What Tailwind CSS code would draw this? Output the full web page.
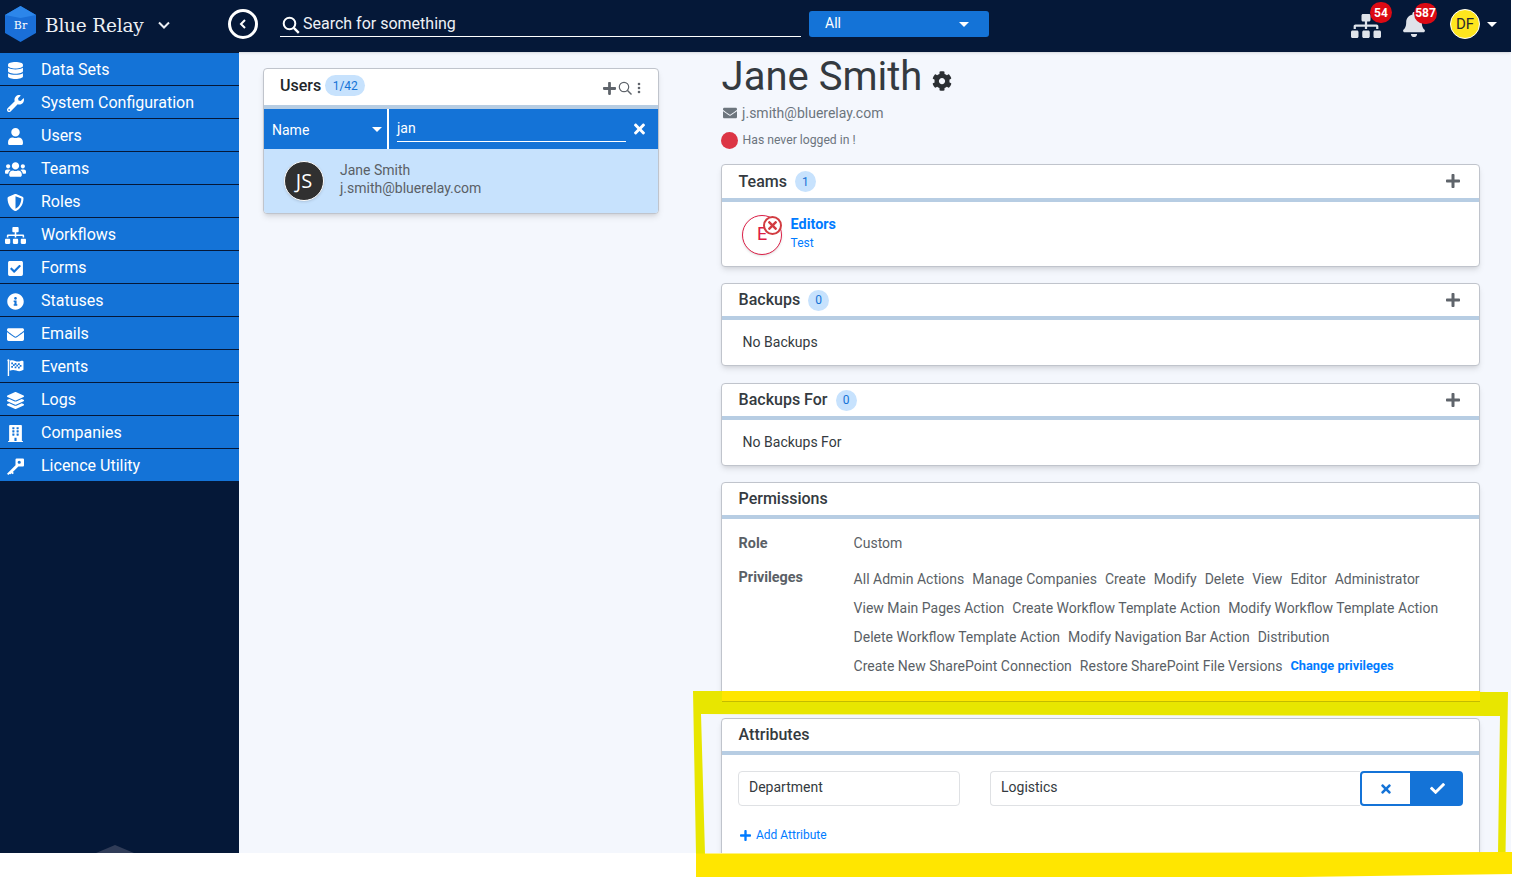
<!DOCTYPE html>
<html lang="en">
<head>
  <meta charset="UTF-8" />
  <title>Blue Relay - Users</title>
  <script src="https://cdn.jsdelivr.net/npm/@tailwindcss/browser@4"></script>
</head>
<body class="bg-white font-['Roboto',sans-serif] overflow-hidden">
  <svg class="hidden">
    <symbol id="i-database" viewBox="0 0 448 512"><path fill="currentColor" d="M448 73.143v45.714C448 159.143 347.667 192 224 192S0 159.143 0 118.857V73.143C0 32.857 100.333 0 224 0s224 32.857 224 73.143zM448 176v102.857C448 319.143 347.667 352 224 352S0 319.143 0 278.857V176c48.125 33.143 136.208 48.572 224 48.572S399.874 209.143 448 176zm0 160v102.857C448 479.143 347.667 512 224 512S0 479.143 0 438.857V336c48.125 33.143 136.208 48.572 224 48.572S399.874 369.143 448 336z"/></symbol>
    <symbol id="i-wrench" viewBox="0 0 512 512"><path fill="currentColor" d="M507.73 109.1c-2.24-9.03-13.54-12.09-20.12-5.51l-74.36 74.36-67.88-11.31-11.31-67.88 74.36-74.36c6.62-6.62 3.43-17.9-5.66-20.16-47.38-11.74-99.55.91-136.58 37.93-39.64 39.64-50.55 97.1-34.05 147.2L18.74 402.76c-24.99 24.99-24.99 65.51 0 90.5 24.99 24.99 65.51 24.99 90.5 0l213.21-213.21c50.12 16.71 107.47 5.68 147.37-34.22 37.07-37.07 49.7-89.32 37.91-136.73zM64 472c-13.25 0-24-10.75-24-24 0-13.26 10.75-24 24-24s24 10.74 24 24c0 13.25-10.75 24-24 24z"/></symbol>
    <symbol id="i-user" viewBox="0 0 448 512"><path fill="currentColor" d="M224 256c70.7 0 128-57.3 128-128S294.7 0 224 0 96 57.3 96 128s57.3 128 128 128zm89.6 32h-16.7c-22.2 10.2-46.9 16-72.9 16s-50.6-5.8-72.9-16h-16.7C60.2 288 0 348.2 0 422.4V464c0 26.5 21.5 48 48 48h352c26.5 0 48-21.5 48-48v-41.6c0-74.2-60.2-134.4-134.4-134.4z"/></symbol>
    <symbol id="i-users" viewBox="0 0 640 512"><path fill="currentColor" d="M96 224c35.3 0 64-28.7 64-64s-28.7-64-64-64-64 28.7-64 64 28.7 64 64 64zm448 0c35.3 0 64-28.7 64-64s-28.7-64-64-64-64 28.7-64 64 28.7 64 64 64zm32 32h-64c-17.6 0-33.5 7.1-45.1 18.6 40.3 22.1 68.9 62 75.1 109.4h66c17.7 0 32-14.3 32-32v-32c0-35.3-28.7-64-64-64zm-256 0c61.9 0 112-50.1 112-112S381.9 32 320 32 208 82.1 208 144s50.1 112 112 112zm76.8 32h-8.3c-20.8 10-43.9 16-68.5 16s-47.6-6-68.5-16h-8.3C179.6 288 128 339.6 128 403.2V432c0 26.5 21.5 48 48 48h288c26.5 0 48-21.5 48-48v-28.8c0-63.6-51.6-115.2-115.2-115.2zm-223.7-13.4C161.5 263.1 145.6 256 128 256H64c-35.3 0-64 28.7-64 64v32c0 17.7 14.3 32 32 32h65.9c6.3-47.4 34.9-87.3 75.2-109.4z"/></symbol>
    <symbol id="i-shield" viewBox="0 0 512 512"><path fill="currentColor" d="M466.5 83.7l-192-80a48.15 48.15 0 0 0-36.9 0l-192 80C27.7 91.1 16 108.6 16 128c0 198.5 114.5 335.7 221.5 380.3 11.8 4.9 25.1 4.9 36.9 0C360.1 472.6 496 349.3 496 128c0-19.4-11.7-36.9-29.5-44.3zM256.1 446.3l-.1-381 175.9 73.3c-3.3 151.4-82.1 261.1-175.8 307.7z"/></symbol>
    <symbol id="i-sitemap" viewBox="0 0 640 512"><path fill="currentColor" d="M128 352H32c-17.67 0-32 14.33-32 32v96c0 17.67 14.33 32 32 32h96c17.67 0 32-14.33 32-32v-96c0-17.67-14.33-32-32-32zm-24-80h192v48h48v-48h192v48h48v-57.59c0-21.17-17.23-38.41-38.41-38.41H344v-64h40c17.67 0 32-14.33 32-32V32c0-17.67-14.33-32-32-32H256c-17.67 0-32 14.33-32 32v96c0 17.67 14.33 32 32 32h40v64H94.41C73.23 224 56 241.23 56 262.41V320h48v-48zm264 80h-96c-17.67 0-32 14.33-32 32v96c0 17.67 14.33 32 32 32h96c17.67 0 32-14.33 32-32v-96c0-17.67-14.33-32-32-32zm240 0h-96c-17.67 0-32 14.33-32 32v96c0 17.67 14.33 32 32 32h96c17.67 0 32-14.33 32-32v-96c0-17.67-14.33-32-32-32z"/></symbol>
    <symbol id="i-check-square" viewBox="0 0 448 512"><path fill="currentColor" d="M400 480H48c-26.51 0-48-21.49-48-48V80c0-26.51 21.49-48 48-48h352c26.51 0 48 21.49 48 48v352c0 26.51-21.49 48-48 48zm-204.686-98.059l184-184c6.248-6.248 6.248-16.379 0-22.627l-22.627-22.627c-6.248-6.248-16.379-6.249-22.628 0L184 302.745l-70.059-70.059c-6.248-6.248-16.379-6.248-22.628 0l-22.627 22.627c-6.248 6.248-6.248 16.379 0 22.627l104 104c6.249 6.25 16.379 6.25 22.628.001z"/></symbol>
    <symbol id="i-info" viewBox="0 0 512 512"><path fill="currentColor" d="M256 8C119.043 8 8 119.083 8 256c0 136.997 111.043 248 248 248s248-111.003 248-248C504 119.083 392.957 8 256 8zm0 110c23.196 0 42 18.804 42 42s-18.804 42-42 42-42-18.804-42-42 18.804-42 42-42zm56 254c0 6.627-5.373 12-12 12h-88c-6.627 0-12-5.373-12-12v-24c0-6.627 5.373-12 12-12h12v-64h-12c-6.627 0-12-5.373-12-12v-24c0-6.627 5.373-12 12-12h64c6.627 0 12 5.373 12 12v100h12c6.627 0 12 5.373 12 12v24z"/></symbol>
    <symbol id="i-envelope" viewBox="0 0 512 512"><path fill="currentColor" d="M502.3 190.8c3.9-3.1 9.7-.2 9.7 4.7V400c0 26.5-21.5 48-48 48H48c-26.5 0-48-21.5-48-48V195.6c0-5 5.7-7.8 9.7-4.7 22.4 17.4 52.1 39.5 154.1 113.6 21.1 15.4 56.7 47.8 92.2 47.6 35.7.3 72-32.8 92.3-47.6 102-74.1 131.6-96.3 154-113.7zM256 320c23.2.4 56.6-29.2 73.4-41.4 132.7-96.3 142.8-104.7 173.4-128.7 5.8-4.5 9.2-11.5 9.2-18.9v-19c0-26.5-21.5-48-48-48H48C21.5 64 0 85.5 0 112v19c0 7.4 3.4 14.3 9.2 18.9 30.6 23.9 40.7 32.4 173.4 128.7 16.8 12.2 50.2 41.8 73.4 41.4z"/></symbol>
    <symbol id="i-flag" viewBox="0 0 16 16"><path fill="currentColor" fill-rule="evenodd" d="M1.200 0.300a1.100 1.100 0 0 1 0.800 1.900V16H0.700V2.200A1.100 1.100 0 0 1 1.200 0.300zM2.600 1.600c2-0.800 3.400-0.500 5 0.200s3.400 0.800 5.300 0.100c1.200-0.500 2.600-0.300 2.600 0.800v7.500c-2.200 1.500-4.600 1.500-6.800 0.700s-4-0.700-6.100 0.100zM4 3.400v1.600h1.600V3.400zM7.200 3.800v1.600h1.600V3.800zM10.400 4.100v1.600h1.600V4.100zM5.600 5v1.600h1.600V5zM8.800 5.400v1.600h1.600V5.400zM12 5.700v1.600h1.600V5.700zM4 6.600v1.600h1.600V6.600zM7.200 7v1.600h1.600V7zM10.400 7.300v1.600h1.600V7.300z"/></symbol>
    <symbol id="i-layers" viewBox="0 0 512 512"><path fill="currentColor" d="M12.41 148.02l232.94 105.67c6.8 3.09 14.49 3.09 21.29 0l232.94-105.67c16.55-7.51 16.55-32.52 0-40.03L266.65 2.31a25.607 25.607 0 0 0-21.29 0L12.41 107.98c-16.55 7.51-16.55 32.53 0 40.04zm487.18 88.28l-58.09-26.33-161.64 73.27c-7.56 3.43-15.59 5.17-23.86 5.17s-16.29-1.74-23.86-5.17L70.51 209.97l-58.1 26.33c-16.55 7.5-16.55 32.5 0 40l232.94 105.59c6.8 3.08 14.49 3.08 21.29 0L499.59 276.3c16.55-7.5 16.55-32.5 0-40zm0 127.8l-57.87-26.23-161.86 73.37c-7.56 3.43-15.59 5.17-23.86 5.17s-16.29-1.74-23.86-5.17L70.29 337.87 12.41 364.1c-16.55 7.5-16.55 32.5 0 40l232.94 105.59c6.8 3.08 14.49 3.08 21.29 0L499.59 404.1c16.55-7.5 16.55-32.5 0-40z"/></symbol>
    <symbol id="i-building" viewBox="0 0 448 512"><path fill="currentColor" d="M436 480h-20V24c0-13.255-10.745-24-24-24H56C42.745 0 32 10.745 32 24v456H12c-6.627 0-12 5.373-12 12v20h448v-20c0-6.627-5.373-12-12-12zM128 76c0-6.627 5.373-12 12-12h40c6.627 0 12 5.373 12 12v40c0 6.627-5.373 12-12 12h-40c-6.627 0-12-5.373-12-12V76zm0 96c0-6.627 5.373-12 12-12h40c6.627 0 12 5.373 12 12v40c0 6.627-5.373 12-12 12h-40c-6.627 0-12-5.373-12-12v-40zm52 148h-40c-6.627 0-12-5.373-12-12v-40c0-6.627 5.373-12 12-12h40c6.627 0 12 5.373 12 12v40c0 6.627-5.373 12-12 12zm76 160h-64v-84c0-6.627 5.373-12 12-12h40c6.627 0 12 5.373 12 12v84zm64-172c0 6.627-5.373 12-12 12h-40c-6.627 0-12-5.373-12-12v-40c0-6.627 5.373-12 12-12h40c6.627 0 12 5.373 12 12v40zm0-96c0 6.627-5.373 12-12 12h-40c-6.627 0-12-5.373-12-12v-40c0-6.627 5.373-12 12-12h40c6.627 0 12 5.373 12 12v40zm0-96c0 6.627-5.373 12-12 12h-40c-6.627 0-12-5.373-12-12V76c0-6.627 5.373-12 12-12h40c6.627 0 12 5.373 12 12v40z"/></symbol>
    <symbol id="i-key" viewBox="0 0 16 16"><path fill="currentColor" fill-rule="evenodd" d="M9 0.500h6a1 1 0 0 1 1 1v5.500a1 1 0 0 1-1 1h-4.300L5.500 13.200l1 1-1.200 1.200-1-1-1 1L2.300 15.100 1.200 16 0 14.800 8 6.800V1.500a1 1 0 0 1 1-1zM11.500 2.500a1.500 1.500 0 1 0 0 3 1.500 1.500 0 0 0 0-3z"/></symbol>
    <symbol id="i-cog" viewBox="0 0 512 512"><path fill="currentColor" d="M487.4 315.7l-42.6-24.6c4.3-23.2 4.3-47 0-70.2l42.6-24.6c4.9-2.8 7.1-8.6 5.5-14-11.1-35.6-30-67.8-54.7-94.6-3.8-4.1-10-5.1-14.8-2.3L380.8 110c-17.9-15.4-38.5-27.3-60.8-35.1V25.8c0-5.6-3.9-10.5-9.4-11.7-36.7-8.2-74.3-7.8-109.2 0-5.5 1.2-9.4 6.1-9.4 11.7V75c-22.2 7.9-42.8 19.8-60.8 35.1L88.7 85.5c-4.9-2.8-11-1.9-14.8 2.3-24.7 26.7-43.6 58.9-54.7 94.6-1.7 5.4.6 11.2 5.5 14L67.300 221c-4.3 23.2-4.3 47 0 70.2l-42.6 24.6c-4.9 2.8-7.1 8.600-5.5 14 11.1 35.6 30 67.8 54.7 94.6 3.8 4.1 10 5.1 14.8 2.3l42.6-24.6c17.9 15.400 38.5 27.300 60.8 35.100v49.200c0 5.600 3.900 10.500 9.400 11.700 36.700 8.200 74.300 7.800 109.200 0 5.500-1.200 9.400-6.100 9.400-11.700v-49.200c22.200-7.900 42.800-19.800 60.800-35.100l42.600 24.600c4.900 2.800 11 1.900 14.800-2.300 24.700-26.700 43.600-58.900 54.700-94.600 1.500-5.500-.7-11.300-5.600-14.100zM256 336c-44.100 0-80-35.900-80-80s35.900-80 80-80 80 35.900 80 80-35.900 80-80 80z"/></symbol>
    <symbol id="i-bell" viewBox="0 0 448 512"><path fill="currentColor" d="M224 512c35.32 0 63.97-28.65 63.97-64H160.030c0 35.350 28.650 64 63.970 64zm215.390-149.710c-19.320-20.760-55.470-51.990-55.470-154.290 0-77.700-54.480-139.900-127.940-155.160V32c0-17.670-14.320-32-31.980-32s-31.980 14.330-31.980 32v20.840C118.560 68.100 64.080 130.300 64.080 208c0 102.300-36.150 133.530-55.470 154.290-6 6.450-8.660 14.160-8.610 21.710.11 16.400 12.980 32 32.100 32h383.800c19.120 0 32-15.600 32.100-32 .05-7.550-2.610-15.270-8.610-21.710z"/></symbol>
    <symbol id="i-plus" viewBox="0 0 448 512"><path fill="currentColor" d="M416 208H272V64c0-17.670-14.330-32-32-32h-32c-17.670 0-32 14.330-32 32v144H32c-17.670 0-32 14.330-32 32v32c0 17.670 14.330 32 32 32h144v144c0 17.670 14.330 32 32 32h32c17.670 0 32-14.330 32-32V304h144c17.670 0 32-14.330 32-32v-32c0-17.670-14.330-32-32-32z"/></symbol>
    <symbol id="i-times" viewBox="0 0 352 512"><path fill="currentColor" d="M242.720 256l100.070-100.070c12.280-12.280 12.280-32.190 0-44.480l-22.240-22.240c-12.280-12.280-32.190-12.280-44.480 0L176 189.280 75.930 89.210c-12.280-12.280-32.190-12.280-44.480 0L9.210 111.450c-12.280 12.280-12.280 32.190 0 44.480L109.280 256 9.210 356.070c-12.280 12.280-12.280 32.190 0 44.480l22.240 22.240c12.280 12.280 32.200 12.280 44.480 0L176 322.720l100.070 100.070c12.280 12.280 32.200 12.280 44.480 0l22.240-22.240c12.280-12.280 12.280-32.190 0-44.480L242.720 256z"/></symbol>
    <symbol id="i-check" viewBox="0 0 512 512"><path fill="currentColor" d="M173.898 439.404l-166.400-166.400c-9.997-9.997-9.997-26.206 0-36.204l36.203-36.204c9.997-9.998 26.207-9.998 36.204 0L192 312.690 432.095 72.596c9.997-9.997 26.207-9.997 36.204 0l36.203 36.204c9.997 9.997 9.997 26.206 0 36.204l-294.400 294.401c-9.998 9.997-26.207 9.997-36.204-.001z"/></symbol>
    <symbol id="i-search" viewBox="0 0 18 18"><circle cx="7.500" cy="7.500" r="5.800" fill="none" stroke="currentColor" stroke-width="2"/><path d="M11.800 11.800L16.800 16.800" stroke="currentColor" stroke-width="2.400"/></symbol>
  </svg>

  <div class="relative w-[1511px] h-[853px] overflow-hidden bg-[#f4f7fd] flex flex-col">
    <!-- top bar -->
    <header class="h-[52px] shrink-0 bg-[#051838] flex items-center pb-[4px] text-white shadow">
      <div class="w-[228px] shrink-0 flex items-center pl-[5px]">
        <svg class="w-[31px] h-[36px]" viewBox="0 0 31 36">
          <polygon points="15.500,0 31,9 31,27 15.500,36 0,27 0,9" fill="#1a6fd8"/>
          <polygon points="15.500,0 31,9 15.500,12 0,9" fill="#2c86ea"/>
          <text x="15.500" y="23" text-anchor="middle" font-family="'DejaVu Serif',serif" font-size="11" fill="#fff">Br</text>
        </svg>
        <span class="ml-[9px] mt-[4px] font-['DejaVu_Serif',serif] text-[18.500px] text-[#eceff4] tracking-[-0.2px]">Blue Relay</span>
        <svg class="ml-[14px] mt-[2px] w-[12px] h-[12px] text-[#eceff4]" viewBox="0 0 12 12"><path d="M1 3.500L6 8.500 11 3.500" fill="none" stroke="currentColor" stroke-width="2"/></svg>
      </div>
      <div class="w-[30px] h-[30px] shrink-0 rounded-full border-[3px] border-white flex items-center justify-center">
        <svg class="w-[8px] h-[10px]" viewBox="0 0 8 10"><path d="M6 1L2 5l4 4" fill="none" stroke="#fff" stroke-width="2"/></svg>
      </div>
      <div class="ml-[22px] w-[521px] h-[25px] border-b border-white flex items-center">
        <svg class="w-[18px] h-[18px] ml-[2px] mt-[2px]"><use href="#i-search"/></svg>
        <span class="ml-[3px] text-[16px] text-[#eef1f6]">Search for something</span>
      </div>
      <div class="ml-[8px] w-[180px] h-[26px] bg-[#1473d7] rounded-[3px] flex items-center justify-between pl-[16px] pr-[20px]">
        <span class="text-[14px] -mt-[1px]">All</span>
        <span class="w-0 h-0 border-x-[5px] border-x-transparent border-t-[5px] border-t-white"></span>
      </div>
      <div class="ml-auto flex items-center pr-[14px]">
        <div class="relative w-[30px] h-[24px] mt-[4px] text-[#dfe3ea]">
          <svg class="w-[30px] h-[24px]"><use href="#i-sitemap"/></svg>
          <span class="absolute -top-[12px] left-[19px] min-w-[22px] h-[21px] rounded-full bg-[#dc0a14] text-white text-[12px] font-bold flex items-center justify-center">54</span>
        </div>
        <div class="relative ml-[22px] w-[22px] h-[25px] text-[#dfe3ea]">
          <svg class="w-[22px] h-[25px]"><use href="#i-bell"/></svg>
          <span class="absolute -top-[9px] left-[11px] min-w-[23px] h-[21px] rounded-full bg-[#dc0a14] text-white text-[12px] font-bold flex items-center justify-center">587</span>
        </div>
        <div class="ml-[25px] w-[30px] h-[30px] rounded-full bg-[#ffe61e] border border-white text-[#2b2b2b] text-[15px] flex items-center justify-center">DF</div>
        <span class="ml-[7px] w-0 h-0 border-x-[5px] border-x-transparent border-t-[5px] border-t-white"></span>
      </div>
    </header>

    <div class="flex flex-1 min-h-0">
      <!-- sidebar -->
      <nav class="w-[239px] shrink-0 bg-[#051838] pt-[1px] flex flex-col text-white text-[16px]">
        <a class="h-[33px] shrink-0 pt-[2px] bg-[#1473d7] border-b border-[#051838] flex items-center"><span class="w-[30px] flex justify-center"><svg class="w-[15px] h-[17px]"><use href="#i-database"/></svg></span><span class="ml-[11px]">Data Sets</span></a>
        <a class="h-[33px] shrink-0 pt-[2px] bg-[#1473d7] border-b border-[#051838] flex items-center"><span class="w-[30px] flex justify-center"><svg class="w-[17px] h-[17px]"><use href="#i-wrench"/></svg></span><span class="ml-[11px]">System Configuration</span></a>
        <a class="h-[33px] shrink-0 pt-[2px] bg-[#1473d7] border-b border-[#051838] flex items-center"><span class="w-[30px] flex justify-center"><svg class="w-[15px] h-[17px]"><use href="#i-user"/></svg></span><span class="ml-[11px]">Users</span></a>
        <a class="h-[33px] shrink-0 pt-[2px] bg-[#1473d7] border-b border-[#051838] flex items-center"><span class="w-[30px] flex justify-center"><svg class="w-[21px] h-[17px]"><use href="#i-users"/></svg></span><span class="ml-[11px]">Teams</span></a>
        <a class="h-[33px] shrink-0 pt-[2px] bg-[#1473d7] border-b border-[#051838] flex items-center"><span class="w-[30px] flex justify-center"><svg class="w-[17px] h-[17px]"><use href="#i-shield"/></svg></span><span class="ml-[11px]">Roles</span></a>
        <a class="h-[33px] shrink-0 pt-[2px] bg-[#1473d7] border-b border-[#051838] flex items-center"><span class="w-[30px] flex justify-center"><svg class="w-[21px] h-[17px]"><use href="#i-sitemap"/></svg></span><span class="ml-[11px]">Workflows</span></a>
        <a class="h-[33px] shrink-0 pt-[2px] bg-[#1473d7] border-b border-[#051838] flex items-center"><span class="w-[30px] flex justify-center"><svg class="w-[15px] h-[17px]"><use href="#i-check-square"/></svg></span><span class="ml-[11px]">Forms</span></a>
        <a class="h-[33px] shrink-0 pt-[2px] bg-[#1473d7] border-b border-[#051838] flex items-center"><span class="w-[30px] flex justify-center"><svg class="w-[17px] h-[17px]"><use href="#i-info"/></svg></span><span class="ml-[11px]">Statuses</span></a>
        <a class="h-[33px] shrink-0 pt-[2px] bg-[#1473d7] border-b border-[#051838] flex items-center"><span class="w-[30px] flex justify-center"><svg class="w-[17px] h-[17px]"><use href="#i-envelope"/></svg></span><span class="ml-[11px]">Emails</span></a>
        <a class="h-[33px] shrink-0 pt-[2px] bg-[#1473d7] border-b border-[#051838] flex items-center"><span class="w-[30px] flex justify-center"><svg class="w-[17px] h-[17px]"><use href="#i-flag"/></svg></span><span class="ml-[11px]">Events</span></a>
        <a class="h-[33px] shrink-0 pt-[2px] bg-[#1473d7] border-b border-[#051838] flex items-center"><span class="w-[30px] flex justify-center"><svg class="w-[17px] h-[17px]"><use href="#i-layers"/></svg></span><span class="ml-[11px]">Logs</span></a>
        <a class="h-[33px] shrink-0 pt-[2px] bg-[#1473d7] border-b border-[#051838] flex items-center"><span class="w-[30px] flex justify-center"><svg class="w-[15px] h-[17px]"><use href="#i-building"/></svg></span><span class="ml-[11px]">Companies</span></a>
        <a class="h-[32px] shrink-0 pt-[2px] bg-[#1473d7] flex items-center"><span class="w-[30px] flex justify-center"><svg class="w-[17px] h-[17px]"><use href="#i-key"/></svg></span><span class="ml-[11px]">Licence Utility</span></a>
        <div class="mt-auto pl-[96px] flex">
          <svg class="w-[38px] h-[8px]" viewBox="0 0 38 8"><polygon points="0,8 19,0 38,8" fill="#303c58"/></svg>
        </div>
      </nav>

      <!-- users list -->
      <main class="flex-1 flex min-w-0 pl-[24px]">
        <div class="w-[396px] shrink-0 pt-[16px]">
          <section class="rounded-[4px] border border-[#c0c4cc] bg-white shadow-md overflow-hidden">
            <div class="h-[36px] flex items-center pl-[16px] pr-[17px]">
              <span class="text-[16px] font-medium text-[#212529] -mt-[3px]">Users</span>
              <span class="ml-[4px] h-[21px] px-[7.500px] rounded-full bg-[#c7e2fd] text-[#1473d7] text-[12px] flex items-center -mt-[3px]">1/42</span>
              <span class="ml-auto flex items-center text-[#5f646b] mt-[2px]">
                <svg class="w-[13px] h-[15px]"><use href="#i-plus"/></svg>
                <svg class="w-[14px] h-[14px] ml-[2px]"><circle cx="6" cy="6" r="4.700" fill="none" stroke="currentColor" stroke-width="1.200"/><path d="M9.500 9.500L13.500 13.500" stroke="currentColor" stroke-width="1.400"/></svg>
                <svg class="w-[4px] h-[12px] ml-[5px]" viewBox="0 0 4 12"><circle cx="2" cy="2" r="1.300" fill="currentColor"/><circle cx="2" cy="6" r="1.300" fill="currentColor"/><circle cx="2" cy="10" r="1.300" fill="currentColor"/></svg>
              </span>
            </div>
            <div class="h-[4px] bg-[#b7cde3]"></div>
            <div class="h-[40px] bg-[#1473d7] flex text-white">
              <div class="w-[125px] flex items-center justify-between pl-[8px] pr-[5px] border-r-[2px] border-white">
                <span class="text-[14px] mt-[3px]">Name</span>
                <span class="w-0 h-0 border-x-[5px] border-x-transparent border-t-[5px] border-t-white"></span>
              </div>
              <div class="flex-1 flex items-center pl-[8px] pr-[13px]">
                <span class="flex-1 h-[26px] border-b border-white text-[14px] leading-[24px] -mt-[1px]">jan</span>
                <svg class="ml-[8px] w-[11px] h-[16px]"><use href="#i-times"/></svg>
              </div>
            </div>
            <div class="h-[64px] bg-[#c7e2fd] flex items-center pl-[20px]">
              <div class="w-[40px] h-[40px] rounded-full bg-[#303030] border border-white shadow text-white text-[20px] font-['Open_Sans',sans-serif] flex items-center justify-center">JS</div>
              <div class="ml-[16px] -mt-[4px] text-[14px] leading-[18px] text-[#5a5f66]">
                <div>Jane Smith</div>
                <div>j.smith@bluerelay.com</div>
              </div>
            </div>
          </section>
        </div>

        <!-- user detail -->
        <div class="ml-[62px] w-[759px] shrink-0 flex flex-col">
          <div class="flex items-center h-[47px] shrink-0 mt-[1px] pl-[0.600px]">
            <h1 class="text-[40px] text-[#343a40] leading-[47px]">Jane Smith</h1>
            <svg class="ml-[10px] mt-[9px] w-[20px] h-[20px] text-[#2b2f33]"><use href="#i-cog"/></svg>
          </div>
          <div class="flex items-center h-[20px] shrink-0 mt-[3px] pl-[0.600px] text-[14px] text-[#6c757d]">
            <svg class="ml-[1.500px] w-[14px] h-[14px]"><use href="#i-envelope"/></svg>
            <span class="ml-[5px]">j.smith@bluerelay.com</span>
          </div>
          <div class="flex items-center h-[20px] shrink-0 mt-[7px] text-[12.200px] text-[#6c757d]">
            <span class="w-[17px] h-[17px] rounded-full bg-[#dc3545]"></span>
            <span class="ml-[4.600px]">Has never logged in !</span>
          </div>

          <section class="mt-[14px] h-[103px] shrink-0 rounded-[4px] border border-[#c0c4cc] bg-white shadow-md">
            <div class="h-[33px] flex items-center pl-[16.600px] pr-[19px]">
              <span class="text-[16px] font-medium text-[#343a40]">Teams</span>
              <span class="ml-[8px] w-[21px] h-[21px] rounded-full bg-[#c7e2fd] text-[#1473d7] text-[12px] flex items-center justify-center">1</span>
              <svg class="ml-auto -mt-[2px] w-[14px] h-[16px] text-[#5f646b]"><use href="#i-plus"/></svg>
            </div>
            <div class="h-[4px] bg-[#b7cde3]"></div>
            <div class="flex items-center pl-[20px] pt-[13px]">
              <div class="relative w-[40px] h-[40px] rounded-full border border-[#dc1e46] bg-white shadow text-[#dc1e46] text-[18px] flex items-center justify-center pb-[4px]">
                E
                <span class="absolute top-0 right-[-1px] w-[19px] h-[19px] rounded-full border-2 border-[#d23c41] bg-white flex items-center justify-center">
                  <svg class="w-[9px] h-[13px] text-[#d23c41]"><use href="#i-times"/></svg>
                </span>
              </div>
              <div class="ml-[8.600px] -mt-[3px] text-[#007bff]">
                <div class="text-[14.400px] font-bold leading-[19px]">Editors</div>
                <div class="text-[12px] leading-[18px]">Test</div>
              </div>
            </div>
          </section>

          <section class="mt-[16px] h-[83px] shrink-0 rounded-[4px] border border-[#c0c4cc] bg-white shadow-md">
            <div class="h-[32px] flex items-center pl-[16.600px] pr-[19px]">
              <span class="text-[16px] font-medium text-[#343a40]">Backups</span>
              <span class="ml-[8px] w-[21px] h-[21px] rounded-full bg-[#c7e2fd] text-[#1473d7] text-[12px] flex items-center justify-center">0</span>
              <svg class="ml-auto w-[14px] h-[16px] text-[#5f646b]"><use href="#i-plus"/></svg>
            </div>
            <div class="h-[4px] bg-[#b7cde3]"></div>
            <div class="pl-[20.600px] pt-[12px] text-[14px] leading-[20px] text-[#343a40]">No Backups</div>
          </section>

          <section class="mt-[17px] h-[83px] shrink-0 rounded-[4px] border border-[#c0c4cc] bg-white shadow-md">
            <div class="h-[32px] flex items-center pl-[16.600px] pr-[19px]">
              <span class="text-[16px] font-medium text-[#343a40]">Backups For</span>
              <span class="ml-[8px] w-[21px] h-[21px] rounded-full bg-[#c7e2fd] text-[#1473d7] text-[12px] flex items-center justify-center">0</span>
              <svg class="ml-auto w-[14px] h-[16px] text-[#5f646b]"><use href="#i-plus"/></svg>
            </div>
            <div class="h-[4px] bg-[#b7cde3]"></div>
            <div class="pl-[20.600px] pt-[12px] text-[14px] leading-[20px] text-[#343a40]">No Backups For</div>
          </section>

          <section class="mt-[16px] h-[220px] shrink-0 rounded-[4px] border border-[#c0c4cc] bg-white shadow-md">
            <div class="h-[32px] flex items-center pl-[16.600px]">
              <span class="text-[16px] font-medium text-[#343a40]">Permissions</span>
            </div>
            <div class="h-[4px] bg-[#b7cde3]"></div>
            <div class="pl-[16.600px] pt-[14px] text-[14px] text-[#5a5f66]">
              <div class="flex leading-[20px]">
                <span class="w-[115px] mt-[1px] font-bold text-[14.400px]">Role</span>
                <span>Custom</span>
              </div>
              <div class="flex mt-[13px]">
                <span class="w-[115px] mt-[1px] font-bold text-[14.400px] leading-[20px]">Privileges</span>
                <div class="w-[600px] flex flex-wrap items-center gap-x-[8px] gap-y-[7px] leading-[22px] mt-[1px]">
                  <span>All Admin Actions</span><span>Manage Companies</span><span>Create</span><span>Modify</span><span>Delete</span><span>View</span><span>Editor</span><span>Administrator</span>
                  <span>View Main Pages Action</span><span>Create Workflow Template Action</span><span>Modify Workflow Template Action</span>
                  <span>Delete Workflow Template Action</span><span>Modify Navigation Bar Action</span><span>Distribution</span>
                  <span>Create New SharePoint Connection</span><span>Restore SharePoint File Versions</span><span class="text-[12.800px] font-bold text-[#007bff]">Change privileges</span>
                </div>
              </div>
            </div>
          </section>

          <section class="mt-[16px] h-[160px] shrink-0 rounded-[4px] border border-[#c0c4cc] bg-white shadow-md">
            <div class="h-[32px] flex items-center pl-[16.600px]">
              <span class="text-[16px] font-medium text-[#343a40]">Attributes</span>
            </div>
            <div class="h-[4px] bg-[#b7cde3]"></div>
            <div class="pl-[16px] pr-[16px] pt-[16px]">
              <div class="flex h-[35px] text-[14px] text-[#343a40]">
                <div class="w-[222px] rounded-[4px] border border-[#dfe1e4] flex items-center pl-[10px] pb-[2px]">Department</div>
                <div class="ml-[30px] flex-1 rounded-l-[4px] border border-r-0 border-[#dfe1e4] flex items-center pl-[10px] pb-[2px]">Logistics</div>
                <div class="w-[52px] rounded-l-[4px] border-2 border-[#1473d7] bg-white flex items-center justify-center text-[#1473d7]">
                  <svg class="w-[10px] h-[14px]"><use href="#i-times"/></svg>
                </div>
                <div class="w-[51px] rounded-r-[4px] bg-[#1473d7] flex items-center justify-center text-white">
                  <svg class="w-[15px] h-[15px]"><use href="#i-check"/></svg>
                </div>
              </div>
              <div class="mt-[20px] flex items-center text-[12px] text-[#007bff]">
                <svg class="ml-[2px] w-[11px] h-[13px]"><use href="#i-plus"/></svg>
                <span class="ml-[5px]">Add Attribute</span>
              </div>
            </div>
          </section>
        </div>
      </main>
    </div>
  </div>

  <!-- yellow highlight drawn over the screenshot -->
  <svg class="absolute left-0 top-0 w-[1513px] h-[879px] pointer-events-none" viewBox="0 0 1513 879">
    <path fill="#e8e600" fill-rule="evenodd" d="M693 691L1508 692L1505.500 854L696 854ZM701 714L705 854L1498 854L1500 716Z"/>
    <rect x="722" y="691" width="758" height="10" fill="#ffe600"/>
    <rect x="722" y="701" width="758" height="1" fill="#c4bb00"/>
    <polygon fill="#ffe600" points="696,853.500 1512,852 1512,874 1300,877 696,877"/>
  </svg>
</body>
</html>
